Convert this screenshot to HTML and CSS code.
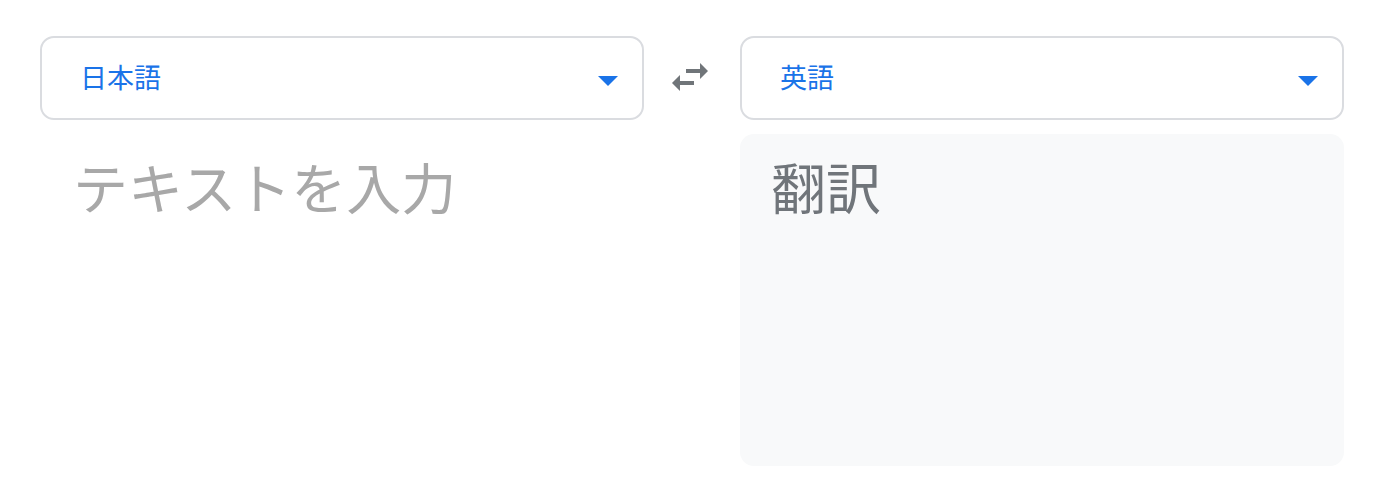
FILE: index.html
```html
<!DOCTYPE html>
<html lang="ja">
<head>
<meta charset="utf-8">
<title>翻訳</title>
<link rel="stylesheet" href="styles.css">
</head>
<body>
<div class="translator">
  <div class="select">
    <span class="select-label">日本語</span>
    <svg class="select-caret" viewBox="0 0 24 24" width="48" height="48"><path d="M7 10l5 5 5-5z"/></svg>
  </div>
  <div class="swap">
    <svg viewBox="0 0 24 24" width="48" height="48"><path d="M6.99 11L3 15l3.99 4v-3H14v-2H6.99v-3zM21 9l-3.99-4v3H10v2h7.01v3L21 9z"/></svg>
  </div>
  <div class="select">
    <span class="select-label">英語</span>
    <svg class="select-caret" viewBox="0 0 24 24" width="48" height="48"><path d="M7 10l5 5 5-5z"/></svg>
  </div>
  <div class="pane pane-input">
    <div class="placeholder">テキストを入力</div>
  </div>
  <div></div>
  <div class="pane pane-output">
    <div class="output-text">翻訳</div>
  </div>
</div>
</body>
</html>
```
FILE: styles.css
```css
html, body {
  margin: 0;
  padding: 0;
  background: #ffffff;
}
body {
  font-family: "Noto Sans CJK JP", "Noto Sans", sans-serif;
}
.translator {
  display: grid;
  grid-template-columns: 604px 96px 604px;
  grid-template-rows: 84px 332px;
  row-gap: 14px;
  padding: 36px 0 0 40px;
}
.select {
  box-sizing: border-box;
  border: 2px solid #dadce0;
  border-radius: 14px;
  background: #fff;
  display: flex;
  align-items: center;
  justify-content: space-between;
  padding: 0 10px 0 38px;
}
.select-label {
  color: #1a73e8;
  font-size: 27px;
  line-height: 1;
  margin-top: -4px;
}
.select-caret {
  fill: #1a73e8;
  margin-top: 4px;
}
.swap {
  display: flex;
  align-items: center;
  justify-content: center;
  padding: 0 4px 2px 0;
}
.swap svg {
  fill: #707579;
}
.pane {
  border-radius: 14px;
  padding: 18px 31px;
}
.pane-input {
  padding-left: 33px;
}
.pane-output {
  background: #f8f9fa;
}
.placeholder,
.output-text {
  font-size: 55px;
  line-height: 1.2;
}
.placeholder {
  color: #a8a8a8;
}
.output-text {
  color: #70757a;
}
```
